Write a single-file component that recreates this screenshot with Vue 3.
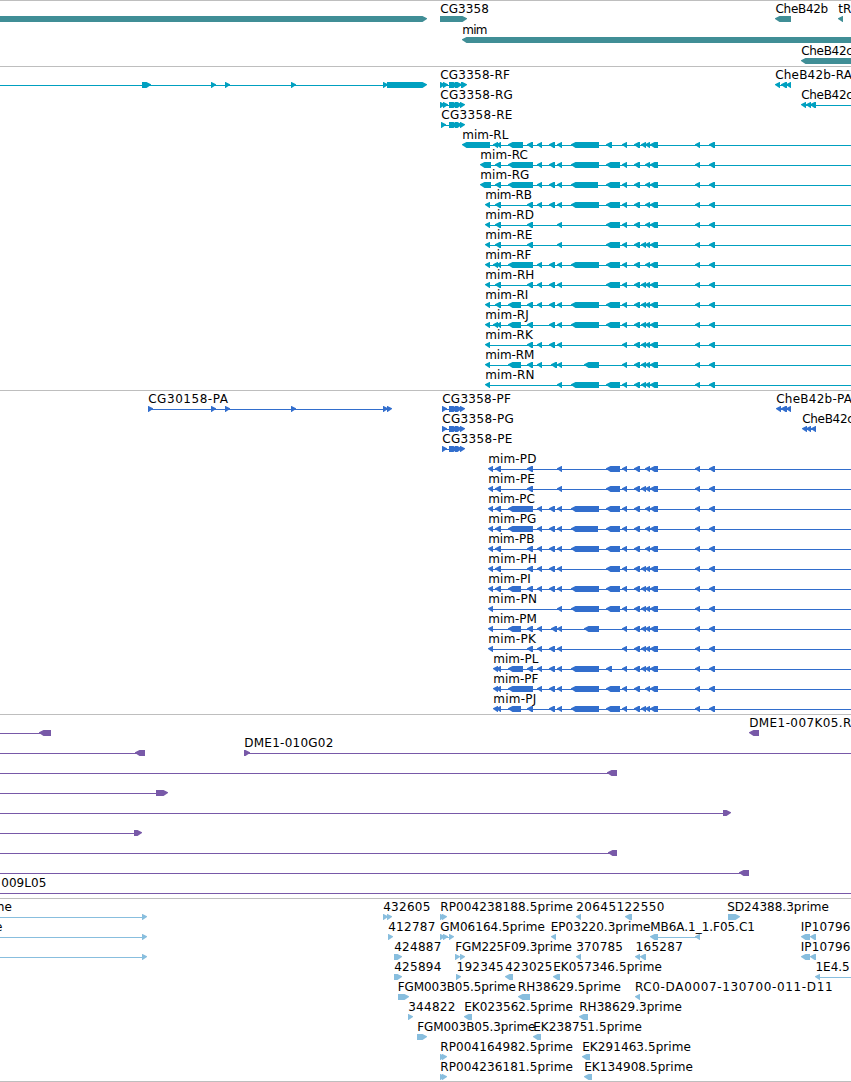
<template>
  <div class="browser">
    <section
      v-for="track in tracks"
      :key="track.name"
      class="track"
      :class="track.name"
    >
      <svg v-for="(row, i) in track.rows" :key="i" class="row" width="851" height="20">
        <g v-for="(f, j) in row" :key="j">
          <rect
            v-if="f.line"
            class="shape"
            :x="f.line[0]"
            y="15"
            :width="f.line[1] - f.line[0]"
            height="1"
          />
          <polygon v-for="(e, k) in f.exons" :key="k" class="shape" :points="arrow(e, f.dir)" />
          <text v-if="f.label" :x="f.x + 0.2" y="9" :textLength="f.w - 0.3">{{ f.label }}</text>
        </g>
      </svg>
    </section>
  </div>
</template>

<script setup>
const END = 851

// label, label x, label width, direction, exons, connecting line
function feat(label, x, w, dir, exons, line) {
  return { label, x, w, dir, exons, line }
}

// exons of the mim gene, shared by its transcripts and proteins
const MIM = {
  u: [462, 490], v: [480, 491], a: [485, 490], p: [488, 493],
  c: [495, 501], d: [493, 498], e: [496, 501],
  F: [508, 533], f: [508, 521], g: [508, 523],
  h: [527, 533], i: [537, 542], j: [549, 555], J: [551, 557], k: [557, 562],
  L: [571, 599], l: [571, 598], m: [584, 599],
  N: [606, 620], n: [606, 612],
  o: [622, 627], q: [634, 640], s: [641, 646], t: [645, 650], w: [650, 658],
  y: [695, 700], z: [709, 715]
}

function mim(suffix, x, w, code) {
  const exons = [...(code + 'tw' + 'yz')].map(c => MIM[c])
  return [feat('mim-' + suffix, x, w, '<', exons, [exons[0][0] + 3, END])]
}

// bar with an arrow head on one end
function arrow([a, b], dir) {
  if (dir === '>') {
    return `${a},12 ${b - 4.5},12 ${b},14.2 ${b},15 ${b - 4.5},18 ${a},18`
  }
  return `${b},12 ${a + 4.5},12 ${a},14.2 ${a},15 ${a + 4.5},18 ${b},18`
}

const genes = [
  [
    feat('', 0, 0, '>', [[-10, 427]]),
    feat('CG3358', 440, 49, '>', [[440, 467]]),
    feat('CheB42b', 775.3, 53, '<', [[775, 791]]),
    feat('tR', 838, 13.5, '<', [[838, 843]])
  ],
  [feat('mim', 462, 25.5, '<', [[462, 870]])],
  [feat('CheB42c', 801, 52, '<', [[801, 870]])]
]

const transcripts = [
  [
    feat('', 0, 0, '>', [[142, 151], [211, 216], [225, 230], [291, 296], [383, 388], [387, 427]], [0, 420]),
    feat('CG3358-RF', 440, 70, '>', [[440, 445], [443, 448], [449, 458], [455, 462], [461, 467]], [440, 464]),
    feat('CheB42b-RA', 775, 77, '<', [[775, 780], [781, 787], [786, 791]], [778, 790])
  ],
  [
    feat('CG3358-RG', 440, 73, '>', [[440, 445], [443, 448], [449, 458], [455, 462], [460, 465]], [440, 463]),
    feat('CheB42c', 801, 52, '<', [[801, 806], [806, 811], [810, 816]], [804, END])
  ],
  [feat('CG3358-RE', 441, 71.5, '>', [[441, 446], [449, 458], [455, 462], [460, 465]], [441, 463])],
  mim('RL', 462, 46.5, 'udeghijkLnoqs'),
  mim('RC', 480, 48, 'vcFijkLNoq'),
  mim('RG', 480, 49.5, 'vcFijklNoq'),
  mim('RB', 485, 47, 'achijkLNoq'),
  mim('RD', 485, 49, 'achkNoq'),
  mim('RE', 485, 47.5, 'achkNoqs'),
  mim('RF', 485, 46.5, 'adeFijkLNoq'),
  mim('RH', 485, 49.5, 'achijkNoqs'),
  mim('RI', 485, 43.5, 'acfhijkLNoqs'),
  mim('RJ', 485, 44, 'adefhjkLNoqs'),
  mim('RK', 485, 48, 'ahijkoqs'),
  mim('RM', 485, 49.5, 'afhiJkmoqs'),
  mim('RN', 485, 49.5, 'akLNoqs')
]

const proteins = [
  [
    feat('CG30158-PA', 148, 80, '>', [[148, 153], [211, 216], [225, 230], [291, 296], [383, 388], [387, 392]], [148, 390]),
    feat('CG3358-PF', 442, 69, '>', [[442, 447], [449, 458], [455, 462], [460, 465]], [442, 463]),
    feat('CheB42b-PA', 776, 76, '<', [[776, 781], [781, 787], [786, 791]], [779, 790])
  ],
  [
    feat('CG3358-PG', 442, 72, '>', [[442, 447], [449, 458], [455, 462], [460, 465]], [442, 463]),
    feat('CheB42c', 802, 52, '<', [[802, 807], [806, 811], [811, 816]], [804, 816])
  ],
  [feat('CG3358-PE', 442, 70.5, '>', [[442, 447], [449, 458], [455, 462], [460, 465]], [442, 463])],
  mim('PD', 488, 48.5, 'pchkNoq'),
  mim('PE', 488, 47, 'pchkNoqs'),
  mim('PC', 488, 47, 'pcFijkLNoq'),
  mim('PG', 488, 48.5, 'pcFijklNoq'),
  mim('PB', 488, 46.5, 'pchijkLNoq'),
  mim('PH', 488, 49, 'pchijkNoqs'),
  mim('PI', 488, 43, 'pcfhijkLNoqs'),
  mim('PN', 488, 49, 'pkLNoqs'),
  mim('PM', 488, 49, 'pfhiJkmoqs'),
  mim('PK', 488, 48, 'phijkoqs'),
  mim('PL', 493, 45.5, 'deghijkLnoqs'),
  mim('PF', 493, 45.5, 'deFijkLNoq'),
  mim('PJ', 493, 43.5, 'defhjkLNoqs')
]

const clones = [
  [
    feat('', 0, 0, '<', [[39, 51]], [0, 44]),
    feat('DME1-007K05.R', 749, 102.5, '<', [[749, 759]])
  ],
  [
    feat('', 0, 0, '<', [[135, 145]], [0, 140]),
    feat('DME1-010G02', 244, 89.5, '>', [[244, 250]], [244, END])
  ],
  [feat('', 0, 0, '<', [[607, 617]], [0, 612])],
  [feat('', 0, 0, '>', [[156, 168]], [0, 160])],
  [feat('', 0, 0, '>', [[723, 731]], [0, 725])],
  [feat('', 0, 0, '>', [[134, 142]], [0, 136])],
  [feat('', 0, 0, '<', [[608, 617]], [0, 612])],
  [feat('', 0, 0, '<', [[739, 749]], [0, 744])],
  [feat('009L05', 1, 45.5, '>', [], [0, END])]
]

const ests = [
  [
    feat('me', -7.5, 19.5, '>', [[142, 147]], [0, 144]),
    feat('432605', 383, 47.5, '>', [[383, 388], [387, 392]]),
    feat('RP004238188.5prime', 440, 133, '>', [[440, 445], [442, 447]]),
    feat('20645122550', 576, 88.5, '<', [[576, 581], [625, 632]]),
    feat('SD24388.3prime', 727, 102, '>', [[728, 740]])
  ],
  [
    feat('e', -5.2, 8, '>', [[142, 147]], [0, 144]),
    feat('412787', 388, 47.5, '>', [[388, 393]]),
    feat('GM06164.5prime', 440, 105, '>', [[440, 445], [443, 448], [449, 454]], [441, 452]),
    feat('EP03220.3prime', 550.5, 100, '<', [[551, 556]]),
    feat('MB6A.1_1.F05.C1', 650, 105, '<', [[650, 658], [695, 700]], [655, 698]),
    feat('IP10796', 800.5, 50, '<', [[801, 810], [810, 816]])
  ],
  [
    feat('', 0, 0, '>', [[142, 147]], [0, 144]),
    feat('424887', 394, 47.5, '>', [[394, 402]]),
    feat('FGM225F09.3prime', 455, 117, '>', [[455, 460], [460, 465]]),
    feat('370785', 576, 47, '<', [[576, 581]]),
    feat('165287', 635.3, 47.7, '<', [[635, 640], [640, 646]]),
    feat('IP10796', 800.5, 50, '<', [[801, 810], [810, 816]])
  ],
  [
    feat('425894', 394, 47.5, '>', [[394, 402]]),
    feat('192345', 456.3, 47.5, '>', [[456, 461]]),
    feat('423025', 505, 47.5, '<', [[505, 513]]),
    feat('EK057346.5prime', 553, 109, '<', [[553, 560]]),
    feat('1E4.5', 815.3, 34.5, '<', [[815, 820]], [818, END])
  ],
  [
    feat('FGM003B05.5prime', 397.5, 118.5, '>', [[398, 409]]),
    feat('RH38629.5prime', 517.5, 103.5, '<', [[518, 530]]),
    feat('RC0-DA0007-130700-011-D11', 634.7, 198, '<', [[635, 640]])
  ],
  [
    feat('344822', 408, 47.5, '>', [[408, 413]]),
    feat('EK023562.5prime', 464, 109, '<', [[464, 472]]),
    feat('RH38629.3prime', 579, 103, '<', [[579, 588]])
  ],
  [
    feat('FGM003B05.3prime', 417, 118.5, '>', [[417, 427]]),
    feat('EK238751.5prime', 533, 109, '<', [[533, 541]])
  ],
  [
    feat('RP004164982.5prime', 440, 133, '>', [[440, 445], [442, 447]]),
    feat('EK291463.5prime', 582, 109, '<', [[582, 590]])
  ],
  [
    feat('RP004236181.5prime', 440, 133, '>', [[440, 445], [442, 447]]),
    feat('EK134908.5prime', 584, 109, '<', [[584, 592]])
  ]
]

const tracks = [
  { name: 'genes', rows: genes },
  { name: 'transcripts', rows: transcripts },
  { name: 'proteins', rows: proteins },
  { name: 'clones', rows: clones },
  { name: 'ests', rows: ests }
]
</script>

<style>
body {
  background: #fff;
}
</style>

<style scoped>
.browser {
  width: 851px;
  height: 1082px;
  overflow: hidden;
  box-sizing: border-box;
  border-bottom: 1px solid #bebebe;
}
.track {
  box-sizing: border-box;
  border-top: 1px solid #bebebe;
  padding-top: 3px;
}
.row {
  display: block;
  height: 20px;
  overflow: visible;
}
.row text {
  font-family: "DejaVu Sans", sans-serif;
  font-size: 12px;
  fill: #000;
}
.genes {
  height: 66px;
}
.genes .row {
  height: 21px;
}
.genes .shape {
  fill: #408e96;
}
.transcripts .shape {
  fill: #00a0c0;
}
.proteins .shape {
  fill: #326ecd;
}
.clones .shape {
  fill: #7859a8;
}
.ests .shape {
  fill: #88bede;
}
</style>
